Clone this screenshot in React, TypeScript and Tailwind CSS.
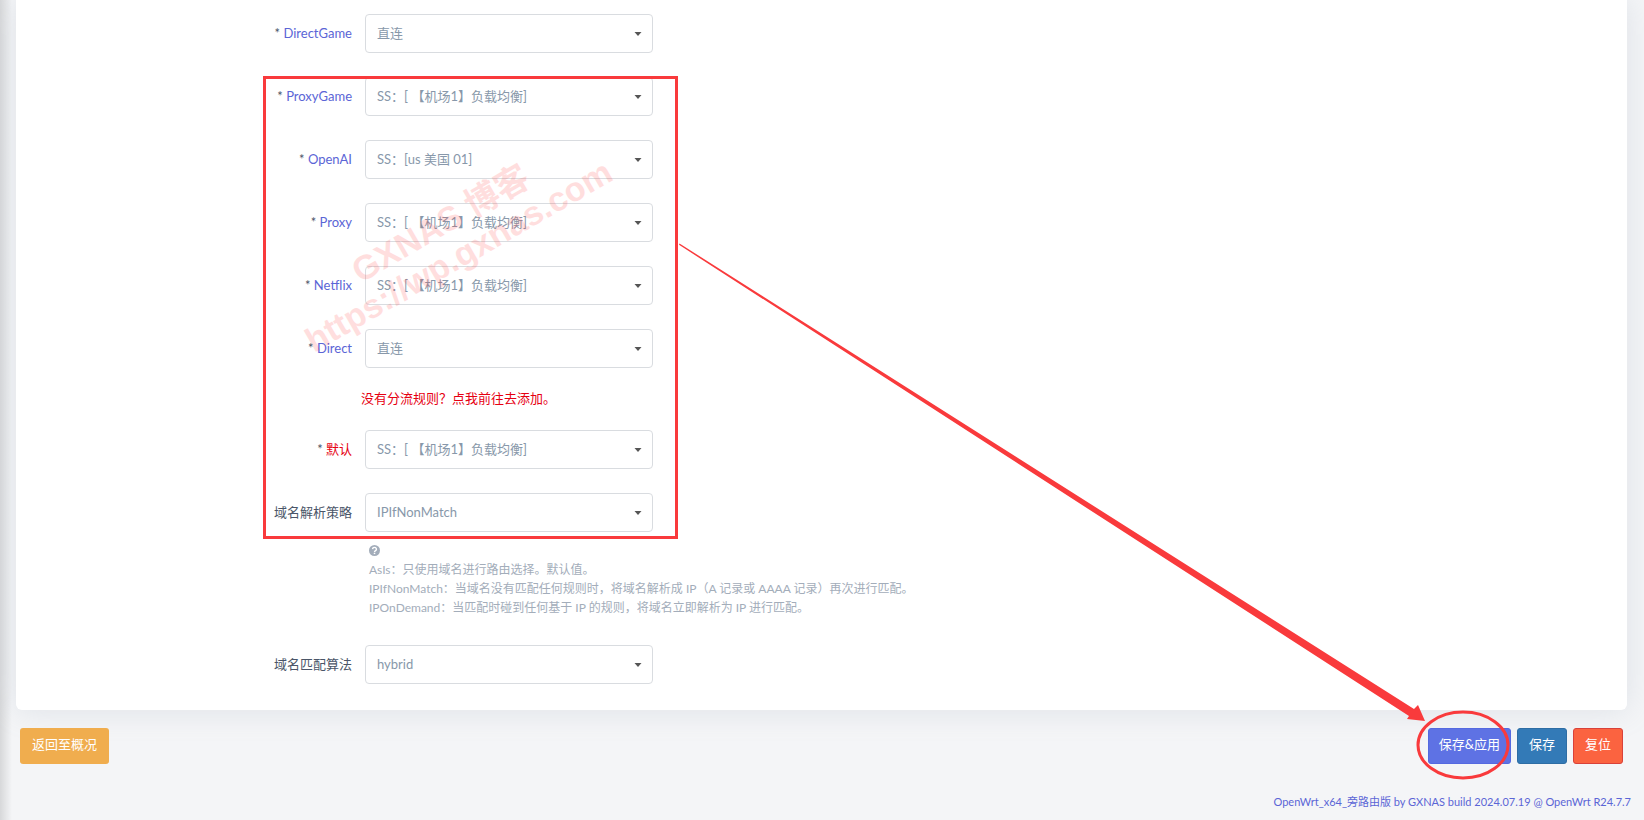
import React from 'react';

const SS_BALANCE = 'SS：[ 【机场1】负载均衡]';

interface FieldProps {
    id: string;
    label: string;
    value: string;
    options?: string[];
    required?: boolean;
    labelClass?: string;
}

function Field({ id, label, value, options = [], required = false, labelClass = 'text-[#4a5568]' }: FieldProps) {
    return (
        <div className="flex items-center">
            <label htmlFor={id} className="w-[336px] shrink-0 text-right pb-0.5">
                {required && <span className="text-[#4a5568]">* </span>}
                <span className={labelClass}>{label}</span>
            </label>
            <div className="relative ml-[13px] w-72">
                <select
                    id={id}
                    defaultValue={value}
                    className="block w-full h-[39px] appearance-none rounded border border-[#d9dce0] bg-white pl-[11px] pr-8 pb-0.5 text-[#8898aa] outline-none focus:border-[#5e72e4]"
                >
                    {[value, ...options].map((o) => (
                        <option key={o}>{o}</option>
                    ))}
                </select>
                <svg viewBox="0 0 8 4" className="pointer-events-none absolute right-[11px] top-[18px] h-1 w-2 fill-[#555]">
                    <path d="M0.5 0h7L4 4z" />
                </svg>
            </div>
        </div>
    );
}

function Annotations() {
    return (
        <svg width="1644" height="820" className="pointer-events-none absolute left-0 top-0" aria-hidden="true">
            <g
                transform="translate(314 353) rotate(-30)"
                className="fill-[#ff3b3b] font-[Liberation_Sans,Noto_Sans_CJK_SC,sans-serif] text-[34px] font-bold"
                opacity="0.16"
            >
                <text x="75" y="-37">GXNAS 博客</text>
                <text x="0" y="0">https://wp.gxnas.com</text>
            </g>
            <rect x="264.5" y="77.5" width="412" height="460" fill="none" stroke="#f93a3c" strokeWidth="3" />
            <path d="M679.5 243.5L1414 709L1418 705L1425 721L1407 719L1409 716L679 244.8Z" fill="#f93a3c" />
            <ellipse cx="1463" cy="745" rx="45" ry="33" fill="none" stroke="#f93a3c" strokeWidth="3" />
        </svg>
    );
}

export default function App() {
    const blue = 'text-[#5b65d6]';

    return (
        <div className="relative min-h-screen overflow-hidden bg-[#f4f5f7] pl-4 pr-[17px] text-[13px] leading-5 font-[Lato,Noto_Sans_CJK_SC,sans-serif]">
            {/* shadow cast by the side menu */}
            <div className="absolute left-0 top-0 h-full w-3 bg-linear-to-r from-black/12 to-transparent" />

            <main className="relative flex flex-col gap-6 rounded-b-md bg-white pt-[14px] pb-[26px] shadow-[0_0_32px_rgba(136,152,170,0.2)]">
                <Field id="direct-game" label="DirectGame" value="直连" required labelClass={blue} />
                <Field id="proxy-game" label="ProxyGame" value={SS_BALANCE} options={['直连']} required labelClass={blue} />
                <Field id="openai" label="OpenAI" value="SS：[us 美国 01]" options={['直连']} required labelClass={blue} />
                <Field id="proxy" label="Proxy" value={SS_BALANCE} options={['直连']} required labelClass={blue} />
                <Field id="netflix" label="Netflix" value={SS_BALANCE} options={['直连']} required labelClass={blue} />
                <Field id="direct" label="Direct" value="直连" required labelClass={blue} />

                <div className="-my-1 pb-0.5 pl-[345px]">
                    <a href="#rules" className="text-[#e60012]">没有分流规则？点我前往去添加。</a>
                </div>

                <Field id="default" label="默认" value={SS_BALANCE} options={['直连']} required labelClass="text-[#e60012]" />

                <div>
                    <Field id="strategy" label="域名解析策略" value="IPIfNonMatch" options={['AsIs', 'IPOnDemand']} />
                    <div className="mt-[13px] mb-1 pl-[353px] text-xs leading-[19px] text-[#a3adba]">
                        <svg viewBox="0 0 20 20" className="my-1 h-[11px] w-[11px]" aria-hidden="true">
                            <circle cx="10" cy="10" r="10" fill="#a3adba" />
                            <path d="M6.5 7.5a3.5 3.2 0 1 1 5.3 2.8c-1.3.8-1.8 1.2-1.8 2.4" fill="none" stroke="#fff" strokeWidth="2.6" />
                            <rect x="8.6" y="14" width="2.8" height="2.6" fill="#fff" />
                        </svg>
                        <p>AsIs：只使用域名进行路由选择。默认值。</p>
                        <p>IPIfNonMatch：当域名没有匹配任何规则时，将域名解析成 IP（A 记录或 AAAA 记录）再次进行匹配。</p>
                        <p>IPOnDemand：当匹配时碰到任何基于 IP 的规则，将域名立即解析为 IP 进行匹配。</p>
                    </div>
                </div>

                <Field id="matcher" label="域名匹配算法" value="hybrid" options={['linear']} />
            </main>

            <div className="relative mt-[18px] flex items-center justify-between px-1 text-white">
                <button type="button" className="h-9 rounded-[3px] bg-[#f0ad4e] px-3 pb-1">返回至概况</button>
                <div className="flex gap-[6px]">
                    <button type="button" className="h-9 rounded-[3px] border border-[#5569e0] bg-[#5e72e4] px-[10px] pb-1">保存&amp;应用</button>
                    <button type="button" className="h-9 rounded-[3px] border border-[#2e6da4] bg-[#337ab7] px-[11px] pb-1">保存</button>
                    <button type="button" className="h-9 rounded-[3px] border border-[#d9413a] bg-[#fb6340] px-[11px] pb-1">复位</button>
                </div>
            </div>

            <footer className="relative mt-7 -mr-1 pb-2 text-right text-[11px] leading-5 text-[#5b65d6]">
                <a href="#openwrt">OpenWrt_x64_旁路由版 by GXNAS build 2024.07.19 @ OpenWrt R24.7.7</a>
            </footer>

            <Annotations />
        </div>
    );
}
